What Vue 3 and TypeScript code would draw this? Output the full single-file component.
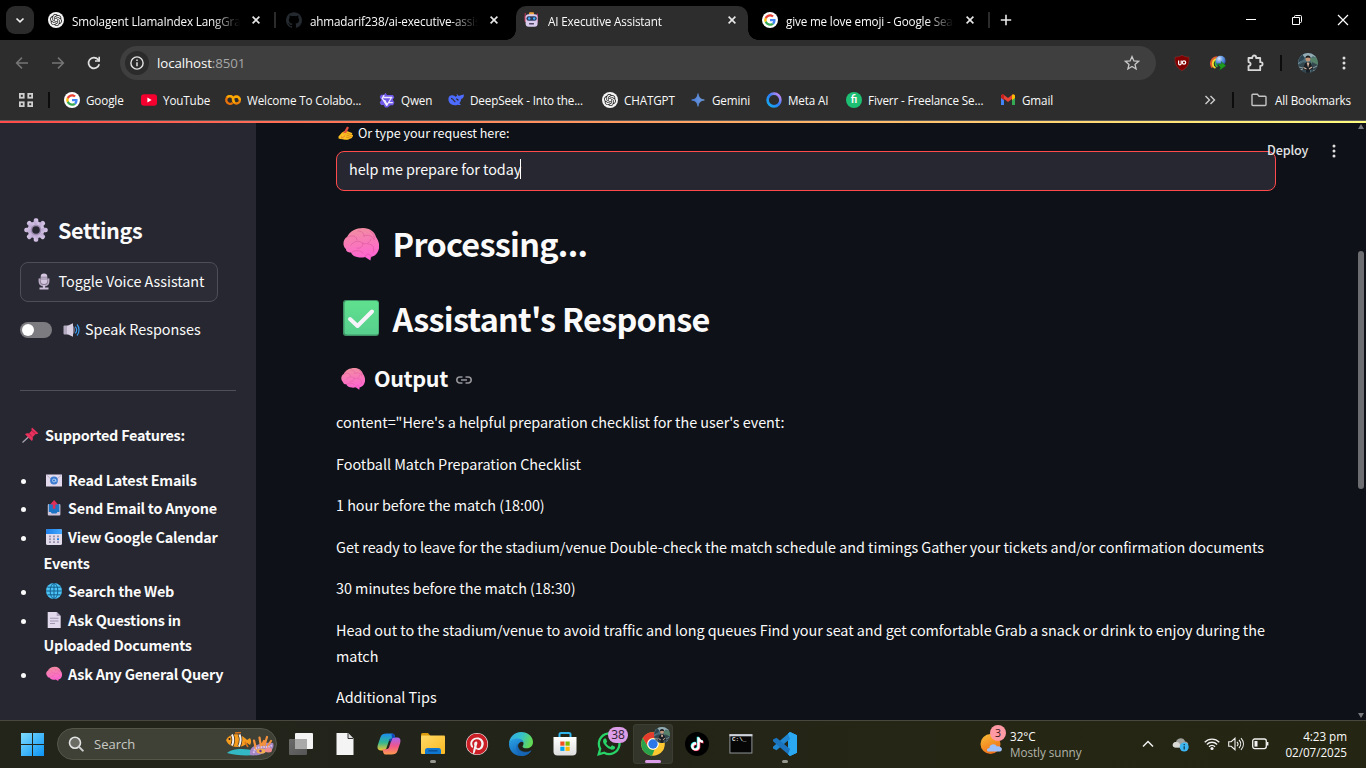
<script setup lang="ts">
import { h } from 'vue'
import type { FunctionalComponent } from 'vue'

const Ico: FunctionalComponent<{ n: string; w?: number; t?: number }> = (p) =>
  h('svg', { width: p.w ?? 16, height: p.t ?? p.w ?? 16 }, [h('use', { href: '#i-' + p.n })])
Ico.props = ['n', 'w', 't']

interface Tab { icon: string; title: string; active?: boolean; sep?: boolean }
const tabs: Tab[] = [
  { icon: 'openai', title: 'Smolagent LlamaIndex LangGraph', sep: true },
  { icon: 'github', title: 'ahmadarif238/ai-executive-assistant' },
  { icon: 'robot', title: 'AI Executive Assistant', active: true },
  { icon: 'google', title: 'give me love emoji - Google Search', sep: true },
]

interface Bookmark { icon: string; label: string; width: number; glyph?: string }
const bookmarks: Bookmark[] = [
  { icon: 'google', label: 'Google', width: 77 },
  { icon: 'youtube', label: 'YouTube', width: 84 },
  { icon: 'colab', label: 'Welcome To Colabo...', width: 154 },
  { icon: 'qwen', label: 'Qwen', width: 69 },
  { icon: 'deepseek', label: 'DeepSeek - Into the...', width: 154 },
  { icon: 'openai', label: 'CHATGPT', width: 88 },
  { icon: 'gemini', label: 'Gemini', width: 76 },
  { icon: 'meta', label: 'Meta AI', width: 80 },
  { icon: 'fiverr', label: 'Fiverr - Freelance Se...', width: 154, glyph: 'fi' },
  { icon: 'gmail', label: 'Gmail', width: 60 },
]

const features = [
  { icon: 'mail', text: 'Read Latest Emails' },
  { icon: 'outbox', text: 'Send Email to Anyone' },
  { icon: 'calendar', text: 'View Google Calendar Events' },
  { icon: 'globe', text: 'Search the Web' },
  { icon: 'page', text: 'Ask Questions in Uploaded Documents' },
  { icon: 'brain', text: 'Ask Any General Query' },
]

const paragraphs = [
  'content="Here\'s a helpful preparation checklist for the user\'s event:',
  'Football Match Preparation Checklist',
  '1 hour before the match (18:00)',
  'Get ready to leave for the stadium/venue Double-check the match schedule and timings Gather your tickets and/or confirmation documents',
  '30 minutes before the match (18:30)',
  'Head out to the stadium/venue to avoid traffic and long queues Find your seat and get comfortable Grab a snack or drink to enjoy during the match',
  'Additional Tips',
]

interface App { icon: string; mark?: 'dot' | 'line'; badge?: string; avatar?: boolean; prompt?: string }
const apps: App[] = [
  { icon: 'taskview' },
  { icon: 'doc' },
  { icon: 'copilot' },
  { icon: 'explorer', mark: 'dot' },
  { icon: 'pinterest' },
  { icon: 'edge' },
  { icon: 'store' },
  { icon: 'whatsapp', badge: '38' },
  { icon: 'chrome', mark: 'line', avatar: true },
  { icon: 'tiktok' },
  { icon: 'terminal', prompt: 'C:\\_' },
  { icon: 'vscode', mark: 'dot' },
]
</script>

<template>
  <div class="screen">
    <svg class="defs" width="0" height="0">
      <defs>
        <linearGradient id="g-brain" x1="0" y1="0" x2="0.2" y2="1"><stop offset="0" stop-color="#f0919c" /><stop offset="1" stop-color="#ff64d2" /></linearGradient>
        <linearGradient id="g-check" x1="0" y1="0" x2="0" y2="1"><stop offset="0" stop-color="#5fe08e" /><stop offset="1" stop-color="#58cf8e" /></linearGradient>
        <linearGradient id="g-gear" x1="1" y1="0" x2="0" y2="1"><stop offset="0" stop-color="#dccdea" /><stop offset="1" stop-color="#b8a3cf" /></linearGradient>
        <linearGradient id="g-gem" x1="0" y1="0" x2="1" y2="0"><stop offset="0" stop-color="#4c7fe0" /><stop offset="1" stop-color="#6f9ad8" /></linearGradient>
        <linearGradient id="g-meta" x1="0" y1="1" x2="1" y2="0"><stop offset="0" stop-color="#12b5f0" /><stop offset="0.5" stop-color="#2a7cf5" /><stop offset="1" stop-color="#e08cf5" /></linearGradient>
        <linearGradient id="g-win" x1="0" y1="0" x2="1" y2="1"><stop offset="0" stop-color="#7fdcff" /><stop offset="1" stop-color="#0a94f5" /></linearGradient>
        <linearGradient id="g-folder" x1="0" y1="0" x2="1" y2="1"><stop offset="0" stop-color="#ffda66" /><stop offset="1" stop-color="#fbb822" /></linearGradient>
        <linearGradient id="g-edge1" x1="0" y1="0" x2="1" y2="0.3"><stop offset="0" stop-color="#30a5e8" /><stop offset="0.55" stop-color="#35c1c9" /><stop offset="1" stop-color="#62d957" /></linearGradient>
        <linearGradient id="g-edge2" x1="0" y1="0" x2="0.6" y2="1"><stop offset="0" stop-color="#2aa2e6" /><stop offset="1" stop-color="#1160b4" /></linearGradient>
        <linearGradient id="g-cop1" x1="0" y1="0" x2="0" y2="1"><stop offset="0" stop-color="#1a8df0" /><stop offset="0.55" stop-color="#35b890" /><stop offset="1" stop-color="#f2c530" /></linearGradient>
        <linearGradient id="g-cop2" x1="0" y1="0" x2="0" y2="1"><stop offset="0" stop-color="#a765f0" /><stop offset="0.5" stop-color="#f0568c" /><stop offset="1" stop-color="#ff9a50" /></linearGradient>
        <linearGradient id="g-sun" x1="0" y1="0" x2="0.5" y2="1"><stop offset="0" stop-color="#f9c038" /><stop offset="1" stop-color="#f07018" /></linearGradient>
        <linearGradient id="g-store" x1="0" y1="0" x2="0" y2="1"><stop offset="0" stop-color="#ffffff" /><stop offset="1" stop-color="#dddddd" /></linearGradient>
        <linearGradient id="g-cal" x1="0" y1="0" x2="1" y2="0"><stop offset="0" stop-color="#1d7fe8" /><stop offset="1" stop-color="#46a8ff" /></linearGradient>
        <linearGradient id="g-tv" x1="0" y1="0" x2="1" y2="1"><stop offset="0" stop-color="#6a6a6a" /><stop offset="1" stop-color="#555" /></linearGradient>
        <radialGradient id="g-idm" cx=".35" cy=".3" r=".8"><stop offset="0" stop-color="#d5e8ff" /><stop offset=".5" stop-color="#5d92e0" /><stop offset="1" stop-color="#1f4fae" /></radialGradient>
        <clipPath id="c-av"><circle cx="10" cy="10" r="10" /></clipPath>
      </defs>

      <symbol id="i-openai" viewBox="0 0 16 16"><circle cx="8" cy="8" r="8" fill="#f4f4f4" /><g transform="translate(2 2) scale(.5)" fill="#222"><path d="M22.2819 9.8211a5.9847 5.9847 0 0 0-.5157-4.9108 6.0462 6.0462 0 0 0-6.5098-2.9A6.0651 6.0651 0 0 0 4.9807 4.1818a5.9847 5.9847 0 0 0-3.9977 2.9 6.0462 6.0462 0 0 0 .7427 7.0966 5.98 5.98 0 0 0 .511 4.9107 6.051 6.051 0 0 0 6.5146 2.9001A5.9847 5.9847 0 0 0 13.2599 24a6.0557 6.0557 0 0 0 5.7718-4.2058 5.9894 5.9894 0 0 0 3.9977-2.9001 6.0557 6.0557 0 0 0-.7475-7.0729zm-9.022 12.6081a4.4755 4.4755 0 0 1-2.8764-1.0408l.1419-.0804 4.7783-2.7582a.7948.7948 0 0 0 .3927-.6813v-6.7369l2.02 1.1686a.071.071 0 0 1 .038.052v5.5826a4.504 4.504 0 0 1-4.4945 4.4944zm-9.6607-4.1254a4.4708 4.4708 0 0 1-.5346-3.0137l.142.0852 4.783 2.7582a.7712.7712 0 0 0 .7806 0l5.8428-3.3685v2.3324a.0804.0804 0 0 1-.0332.0615L9.74 19.9502a4.4992 4.4992 0 0 1-6.1408-1.6464zM2.3408 7.8956a4.485 4.485 0 0 1 2.3655-1.9728V11.6a.7664.7664 0 0 0 .3879.6765l5.8144 3.3543-2.0201 1.1685a.0757.0757 0 0 1-.071 0l-4.8303-2.7865A4.504 4.504 0 0 1 2.3408 7.872zm16.5963 3.8558L13.1038 8.364 15.1192 7.2a.0757.0757 0 0 1 .071 0l4.8303 2.7913a4.4944 4.4944 0 0 1-.6765 8.1042v-5.6772a.79.79 0 0 0-.407-.667zm2.0107-3.0231l-.142-.0852-4.7735-2.7818a.7759.7759 0 0 0-.7854 0L9.409 9.2297V6.8974a.0662.0662 0 0 1 .0284-.0615l4.8303-2.7866a4.4992 4.4992 0 0 1 6.6802 4.66zM8.3065 12.863l-2.02-1.1638a.0804.0804 0 0 1-.038-.0567V6.0742a4.4992 4.4992 0 0 1 7.3757-3.4537l-.142.0805L8.704 5.459a.7948.7948 0 0 0-.3927.6813zm1.0976-2.3654l2.602-1.4998 2.6069 1.4998v2.9994l-2.5974 1.4997-2.6067-1.4997Z" /></g></symbol>
      <symbol id="i-github" viewBox="0 0 24 24"><path fill="#24292f" d="M12 .297c-6.63 0-12 5.373-12 12 0 5.303 3.438 9.8 8.205 11.385.6.113.82-.258.82-.577 0-.285-.01-1.04-.015-2.04-3.338.724-4.042-1.61-4.042-1.61C4.422 18.07 3.633 17.7 3.633 17.7c-1.087-.744.084-.729.084-.729 1.205.084 1.838 1.236 1.838 1.236 1.07 1.835 2.809 1.305 3.495.998.108-.776.417-1.305.76-1.605-2.665-.3-5.466-1.332-5.466-5.93 0-1.31.465-2.38 1.235-3.22-.135-.303-.54-1.523.105-3.176 0 0 1.005-.322 3.3 1.23.96-.267 1.98-.399 3-.405 1.02.006 2.04.138 3 .405 2.28-1.552 3.285-1.23 3.285-1.23.645 1.653.24 2.873.12 3.176.765.84 1.23 1.91 1.23 3.22 0 4.61-2.805 5.625-5.475 5.92.42.36.81 1.096.81 2.22 0 1.606-.015 2.896-.015 3.286 0 .315.21.69.825.57C20.565 22.092 24 17.592 24 12.297c0-6.627-5.373-12-12-12" /></symbol>
      <symbol id="i-robot" viewBox="0 0 16 16"><rect x="5" y="0.3" width="5" height="3" rx="1" fill="#f3a33c" /><path d="M1.200 1v5" stroke="#c2355e" stroke-width="1" /><rect x=".6" y="4" width="2" height="6" rx="1" fill="#d8446c" /><rect x="12.600" y="1.500" width="1.400" height="9" rx=".7" fill="#b03060" /><rect x="1.600" y="2.200" width="12" height="12.600" rx="3" fill="#d9cbec" /><rect x="2.400" y="4.200" width="10.400" height="4.600" rx="2.200" fill="#2c3a5c" /><circle cx="5.200" cy="6.500" r="1.200" fill="#3cb0ff" /><circle cx="10.200" cy="6.500" r="1.200" fill="#3cb0ff" /><rect x="5" y="11" width="5" height="1.400" rx=".5" fill="#4d4262" /></symbol>
      <symbol id="i-google" viewBox="0 0 16 16"><circle cx="8" cy="8" r="8" fill="#fff" /><g transform="translate(2.2 2.2) scale(.242)"><path fill="#EA4335" d="M24 9.5c3.54 0 6.71 1.22 9.21 3.6l6.85-6.85C35.9 2.38 30.47 0 24 0 14.62 0 6.51 5.38 2.56 13.22l7.98 6.19C12.43 13.72 17.74 9.5 24 9.5z" /><path fill="#4285F4" d="M46.98 24.55c0-1.57-.15-3.09-.38-4.55H24v9.02h12.94c-.58 2.96-2.26 5.48-4.78 7.18l7.73 6c4.51-4.18 7.09-10.36 7.09-17.65z" /><path fill="#FBBC05" d="M10.53 28.59A14.5 14.5 0 0 1 9.77 24c0-1.59.27-3.14.76-4.59l-7.98-6.19A23.9 23.9 0 0 0 0 24c0 3.87.92 7.54 2.56 10.78l7.97-6.19z" /><path fill="#34A853" d="M24 48c6.48 0 11.93-2.13 15.89-5.81l-7.73-6c-2.15 1.45-4.92 2.3-8.16 2.3-6.26 0-11.57-4.22-13.47-9.91l-7.98 6.19C6.51 42.62 14.62 48 24 48z" /></g></symbol>
      <symbol id="i-youtube" viewBox="0 0 16 16"><rect y="2.300" width="16" height="11.400" rx="3" fill="#f6002f" /><path d="M6.400 5.600v4.800L10.600 8z" fill="#fff" /></symbol>
      <symbol id="i-colab" viewBox="0 0 16 16"><g fill="none" stroke-width="2.300"><path d="M7.600 5.200A3.800 3.800 0 1 0 7.600 10.800" stroke="#e8710a" /><circle cx="11.400" cy="8" r="3.500" stroke="#e8800a" /><path d="M2 5.200A3.800 3.800 0 0 1 7.400 5.200L9.300 10.800M14.900 8A3.500 3.500 0 0 0 9 5.600" stroke="#f9ab00" /></g></symbol>
      <symbol id="i-qwen" viewBox="0 0 16 16"><path d="M6.500.8 8 3h6l1.300 2.500-1.500 2 1.600 3.300-1.300 2.400h-2.700L8.600 15.500H6l-1.300-2.600H2L.7 10.500 2.300 8 .7 5 2 2.700h3z" fill="#6e5ae8" /><path d="M5.200 3.200 3.200 6.200l4.600 7.400M4.500 5.500h8.800M12.500 5.500 8.200 12.800 5.600 8M13.800 10.600H10" stroke="#efeaff" stroke-width="1.300" fill="none" /></symbol>
      <symbol id="i-deepseek" viewBox="0 0 16 16"><path d="M.4 7c0-2.600 1.800-4 4.400-3.700 1 .2 2 .8 2.800 1.500l1.700-1c-.8-.4-.9-1.200-.4-1.600.8.3 1.500 1.100 1.900 1.900 1.200-.2 1.700-1 3-1.100.8-.1 1.400-.4 1.900-.8.5 2.600-.6 4.300-2.500 4.700-.2 2-1 3.200-1.900 4.300l1.600 1.200c-1 .8-2.300.7-3.300.3C5 14.300.4 12 .4 7z" fill="#4d6bfe" /><path d="M3 6.400c1.800-.2 3 2.400 4.300 3.800M8.200 6.800l1.700.9v1" stroke="#2d2d2d" stroke-width="1.100" fill="none" /></symbol>
      <symbol id="i-gemini" viewBox="0 0 16 16"><path d="M8 1.600C8.600 5.600 10.400 7.400 14.400 8 10.400 8.600 8.600 10.400 8 14.400 7.400 10.400 5.600 8.600 1.600 8 5.600 7.400 7.400 5.600 8 1.600z" fill="url(#g-gem)" stroke="url(#g-gem)" stroke-width=".7" /></symbol>
      <symbol id="i-meta" viewBox="0 0 16 16"><circle cx="8" cy="8" r="6.400" fill="none" stroke="url(#g-meta)" stroke-width="2.600" /></symbol>
      <symbol id="i-fiverr" viewBox="0 0 16 16"><circle cx="8" cy="8" r="8" fill="#1dbf73" /></symbol>
      <symbol id="i-gmail" viewBox="0 0 16 16"><path d="M1 4v9h3V6z" fill="#4285f4" /><path d="M12 6v7h3V4z" fill="#34a853" /><path d="M1 4.400C1 2.400 3 2.200 4 3l4 3.100L12 3c1-.8 3-.6 3 1.400L8 10z" fill="#ea4335" /><path d="M12 3c1-.8 3-.6 3 1.400V6l-3 2.200z" fill="#fbbc04" /><path d="M1 4.400V6l3 2.200V3C3 2.200 1 2.400 1 4.400z" fill="#c5221f" /></symbol>

      <symbol id="i-close" viewBox="0 0 16 16"><path d="m4.600 4.600 6.800 6.800M11.400 4.600l-6.800 6.800" stroke="#e8e8e8" stroke-width="1.600" /></symbol>
      <symbol id="i-back" viewBox="0 0 16 16"><path d="M14 8H3M8 2.600 2.600 8 8 13.400" stroke="#757575" stroke-width="1.500" fill="none" /></symbol>
      <symbol id="i-fwd" viewBox="0 0 16 16"><path d="M2 8h11M8 2.600 13.400 8 8 13.400" stroke="#757575" stroke-width="1.500" fill="none" /></symbol>
      <symbol id="i-reload" viewBox="0 0 16 16"><path d="M13.200 9.200A5.400 5.400 0 1 1 12 4.400L13.400 6" stroke="#e0e0e0" stroke-width="1.700" fill="none" /><path d="M14 1.800v5H9V5.300h3.400V1.800z" fill="#e0e0e0" /></symbol>
      <symbol id="i-info" viewBox="0 0 24 24"><circle cx="12" cy="12" r="12" fill="#2b2b2b" /><circle cx="12" cy="12" r="6.100" fill="none" stroke="#e3e3e3" stroke-width="1.400" /><path d="M12 11.200v4M12 8.400v1.500" stroke="#e3e3e3" stroke-width="1.500" /></symbol>
      <symbol id="i-star" viewBox="0 0 16 16"><path d="m8 1.600 1.900 4.300 4.700.4-3.600 3.100 1.100 4.600L8 11.500 3.900 14 5 9.400 1.400 6.300l4.700-.4z" fill="none" stroke="#c9c9c9" stroke-width="1.300" /></symbol>
      <symbol id="i-ublock" viewBox="0 0 16 16"><path d="M8 .2c2 1.300 4.600 1.900 7 2 .2 6.200-.8 10-7 13.500C1.800 12.200.8 8.400 1 2.200c2.400-.1 5-.7 7-2z" fill="#800000" stroke="#a83c3c" stroke-width=".4" /><path d="M4.600 5.500v3a1.300 1.300 0 0 0 2.600 0v-3" stroke="#fff" stroke-width="1.200" fill="none" /><circle cx="10" cy="7.500" r="1.700" stroke="#fff" stroke-width="1.200" fill="none" /></symbol>
      <symbol id="i-idm" viewBox="0 0 16 16"><path d="M7.500 2.200A6.300 6.300 0 0 0 2.500 12.500" stroke="#e05a2b" stroke-width="2" fill="none" /><path d="M6.500 4A4.800 4.800 0 0 0 5.500 13" stroke="#f5d82e" stroke-width="1.800" fill="none" /><path d="M7 5.600a3.500 3.500 0 0 0 .5 6" stroke="#35b84a" stroke-width="1.800" fill="none" /><circle cx="10.600" cy="5.700" r="5" fill="url(#g-idm)" /><path d="M7.500 8.800h4.200l-.5-2.300L16 10.800l-6.500 4.700.8-2.900z" fill="#1f9a1f" stroke="#0b5c0f" stroke-width=".4" /></symbol>
      <symbol id="i-puzzle" viewBox="0 0 18 18"><path d="M2.500 4h3.800V3.400a1.900 1.900 0 0 1 3.800 0V4h4.100v4.200h.6a1.800 1.800 0 0 1 0 3.600h-.6v4.400H2.500v-4.100c2.800-.4 2.800-3.600 0-4z" fill="none" stroke="#d8d8d8" stroke-width="1.800" stroke-linejoin="round" /></symbol>
      <symbol id="i-avatar" viewBox="0 0 20 20"><g clip-path="url(#c-av)"><rect width="20" height="20" fill="#4a6a76" /><path d="M0 0h20v6l-5-3-4 4-5-2-6 6z" fill="#93acb4" /><path d="M0 3l4-2 3 4-2 2-5 3z" fill="#2b4450" /><path d="M12 5l8-1v8l-6 2z" fill="#55806a" /><path d="M0 12l6-3 3 3v8H0zM14 9l6 3v8h-7z" fill="#34474f" /><path d="M1 14l4 1M15 15l4-2M2 17l3-1M15 18l3-1" stroke="#8c9a9c" stroke-width="1" /><circle cx="10" cy="6" r="2.500" fill="#c39578" /><path d="M7.300 5.500c0-4 5.400-4 5.400 0C11 4.300 9 4.300 7.300 5.500z" fill="#16181b" /><path d="M7 10c1.500-1.500 4.500-1.500 6 0l2 6-3 1v3H8v-3l-3-1z" fill="#1b1f26" /><path d="M5.500 14.500l3 1.500M14 14l-3 2M9.300 9.500l.8 3 .8-3" stroke="#d2b49c" stroke-width="1.200" /></g></symbol>
      <symbol id="i-dots" viewBox="0 0 4 16"><g fill="#dedede"><circle cx="2" cy="3" r="1.500" /><circle cx="2" cy="8" r="1.500" /><circle cx="2" cy="13" r="1.500" /></g></symbol>
      <symbol id="i-grid" viewBox="0 0 14 14"><g fill="none" stroke="#d0d0d0" stroke-width="1.800"><rect x=".9" y=".9" width="3.800" height="3.800" /><rect x="9.300" y=".9" width="3.800" height="3.800" /><rect x=".9" y="9.300" width="3.800" height="3.800" /><rect x="9.300" y="9.300" width="3.800" height="3.800" /></g></symbol>
      <symbol id="i-more" viewBox="0 0 12 12"><path d="m1.500 2 4 4-4 4M6.500 2l4 4-4 4" stroke="#cfcfcf" stroke-width="1.400" fill="none" /></symbol>
      <symbol id="i-dir" viewBox="0 0 16 14"><path d="M1 2.200c0-.6.3-.9.9-.9h4.500l1.700 1.900h6c.6 0 .9.300.9.900v7.500c0 .6-.3.9-.9.900H1.900c-.6 0-.9-.3-.9-.9z" fill="none" stroke="#c4c4c4" stroke-width="1.400" /></symbol>

      <symbol id="i-brain" viewBox="0 0 36 33"><path d="M3 21C-1 18 0 11 4 9 7 3 13 0 20 0c7 0 12 4 13 9 4 5 4 12 1 16-1.500 2.500-4 3.500-6 4l-.6 3.500L22 29c-3 .8-5 .6-8 0-3-.5-5-2-6-4.500-2 .2-5-.5-5-3.500z" fill="url(#g-brain)" /><g fill="none" stroke="#d65099" stroke-width="1" stroke-linecap="round" opacity=".5"><path d="M5 9c5-3 9 0 9 3M15 3c4 0 6 2 6 5M21 8c4-2 8 0 10 3M8 17c3-4 8-5 11-2 4 2 8 0 9-4M20 15c0 4-3 6-6 5M25 16c5 0 7 4 5 8M9 24c4-2 8-2 11 1M22 29c1-4 5-4 6 0M27 3c3 2 5 5 4 9" /></g></symbol>
      <symbol id="i-check" viewBox="0 0 36 36"><rect width="36" height="36" rx="3" fill="#3f9266" /><rect x="1.500" y="1" width="34" height="33.500" rx="2.500" fill="url(#g-check)" /><path d="m7 19 7.500 7L29 11.500" fill="none" stroke="#f6f3fa" stroke-width="4" stroke-linecap="round" stroke-linejoin="round" /></symbol>
      <symbol id="i-gear" viewBox="0 0 24 24"><g fill="url(#g-gear)"><circle cx="12" cy="12" r="8.400" /><rect v-for="a in 8" :key="a" x="9.700" y="0.300" width="4.600" height="6" rx="1.800" :transform="`rotate(${a * 45} 12 12)`" /></g><circle cx="12" cy="12" r="5.400" fill="#9d8bb0" /><circle cx="12" cy="12" r="3.800" fill="#262730" /></symbol>
      <symbol id="i-mic" viewBox="0 0 12 17"><path d="M1.300 5.500v3c0 5.500 9.400 5.500 9.400 0v-3" fill="#85788f" stroke="#b9abc4" stroke-width="1.500" /><rect x="2.700" y=".5" width="6.600" height="10.500" rx="3.200" fill="#d3c6de" /><path d="M3 4.200h6M3 6h6" stroke="#8c7e96" stroke-width=".9" /><path d="M5 12h2v2.500h3.500V16.500h-9v-2H5z" fill="#cdbfd9" /></symbol>
      <symbol id="i-speaker" viewBox="0 0 17 14"><rect x=".5" y="2.500" width="5" height="9" rx="1" fill="#b5abc0" /><path d="M4 3 10 .3v13.400L4 11z" fill="#d9cfe2" /><path d="M10 3c2.400 1 2.400 7 0 8z" fill="#7d7488" /><path d="M12.300 3.600c1.600 2 1.600 4.800 0 6.800M14 1.500c2.700 3 2.700 8 0 11" fill="none" stroke="#3a9cf0" stroke-width="1.200" /></symbol>
      <symbol id="i-pin" viewBox="0 0 17 16"><path d="m7 9.500-6.500 6" stroke="#a8a3b3" stroke-width="1.300" /><path d="m10 .6 6.300 5.600c-1 1.200-2 1-2.700.8l-3 3.200c.6 1.500.2 2.900-.7 3.800L3 7.200c1-1 2.300-1.300 3.800-.7l3-3c-.5-1-.4-2 .2-2.900z" fill="#e8315c" /><path d="M7.200 6.600 10 9.600M10 3.600l3.400 3.200" stroke="#a81e45" stroke-width="1" /></symbol>
      <symbol id="i-mail" viewBox="0 0 16 16"><rect y="2.500" width="16" height="12" rx=".6" fill="#e2d9ed" /><path d="m.5 3 7.500 6.500L15.500 3" stroke="#bdb2cc" fill="none" /><circle cx="8" cy="8.500" r="3.900" fill="#3b7bd0" /><circle cx="8" cy="8.500" r="1.500" fill="none" stroke="#b7d4f5" stroke-width=".9" /><path d="M9.500 7v2c0 .8 1.300.6 1.300-.6" stroke="#b7d4f5" stroke-width=".7" fill="none" /></symbol>
      <symbol id="i-outbox" viewBox="0 0 16 16"><rect x="1.800" y="4" width="12.600" height="11.600" rx="1" fill="#cfc5da" /><path d="M2.800 4h10.600v8h-2l-1 1.400H5.800L4.800 12h-2z" fill="#1d74c4" /><path d="M8.100 0 12 4.500H9.400v4.300H6.800V4.500H4.200z" fill="#e02f56" /></symbol>
      <symbol id="i-calendar" viewBox="0 0 16 16"><rect width="16" height="16" rx="1.600" fill="#e2dbec" /><path d="M0 5V1.600Q0 0 1.600 0h12.800Q16 0 16 1.600V5z" fill="url(#g-cal)" /><g fill="#9e95ad"><rect x="3" y="6.500" width="2" height="1.800" /><rect x="7" y="6.500" width="2" height="1.800" /><rect x="11" y="6.500" width="2" height="1.800" /><rect x="3" y="9.300" width="2" height="1.800" /><rect x="7" y="9.300" width="2" height="1.800" /><rect x="3" y="12.200" width="2" height="1.800" /><rect x="7" y="12.200" width="2" height="1.800" /></g><rect x="11" y="9.300" width="2" height="1.800" fill="#1d7fe8" /><rect x="11" y="12.200" width="2" height="1.800" fill="#9e95ad" /></symbol>
      <symbol id="i-globe" viewBox="0 0 16 16"><circle cx="8" cy="8" r="8" fill="#4cc3f5" /><g fill="none" stroke="#14608f" stroke-width="1"><ellipse cx="8" cy="8" rx="3.800" ry="7.600" /><path d="M8 0v16M0 8h16M1.500 4.200h13M1.500 11.800h13" /></g></symbol>
      <symbol id="i-page" viewBox="0 0 16 16"><path d="M1.700 0h9l4 4v12h-13z" fill="#e2d9ed" /><path d="m10.700 0 4 4h-4z" fill="#aea2bd" /><path d="M4 6.200h8.500M4 9h8.500M4 11.500h5" stroke="#a096b0" stroke-width="1.100" /></symbol>
      <symbol id="i-hand" viewBox="0 0 16 14"><path d="M.5 10.500 4 6.500l3.500-2 6 2.200c1.300.6.9 1.700 0 1.800l1.300.6c.6.9 0 1.700-.7 1.700.4.900-.3 1.500-1.200 1.500L10 13.800c-3 .3-6.500-.8-9.500-1.300z" fill="#fcc021" /><path d="m9 7.400 5 1.300M8.500 9.200l5.500 1.700M8 11l5 1.500" stroke="#d07c14" stroke-width=".7" /><path d="m3.600 10.200 5.400-9.700 2 1L6.200 11l-2.700 1.600z" fill="#e0503c" /><path d="M3 9.500c1-1.800 3-2.500 5-2.800l-.5 2-3 3z" fill="#fcc021" /></symbol>
      <symbol id="i-link" viewBox="0 0 16 8"><path d="M6.500 1H3.800a3 3 0 0 0 0 6h2.700M9.500 1h2.700a3 3 0 0 1 0 6H9.500M5 4h6" stroke="#96979c" stroke-width="1.600" fill="none" /></symbol>

      <symbol id="i-win" viewBox="0 0 23 23"><path d="M0 0h11v11H0zM12 0h11v11H12zM0 12h11v11H0zM12 12h11v11H12z" fill="url(#g-win)" /></symbol>
      <symbol id="i-search" viewBox="0 0 16 16"><circle cx="7" cy="6.800" r="5.500" fill="#6b6d65" stroke="#e4e6e6" stroke-width="1.600" /><path d="m10.800 10.600 4 4" stroke="#d0d2d2" stroke-width="2" stroke-linecap="round" /></symbol>
      <symbol id="i-reef" viewBox="0 0 50 24"><path d="M2 21c5-5 19-5 28-2l6 3c-8 2-25 2-34-1z" fill="#33b9c5" /><path d="M1 8C4 2 11 .5 17 4c2 1 4 3 5 4l3-2c1.500 2 1.500 5 0 7l-3-2c-3 4-10 5-15 3C4 13 2 11 1 8z" fill="#f59b1e" /><path d="M7 2.500q2.500 5.500 0 11M14.500 2.500q2.500 5.500-.5 12" stroke="#3a2a1c" stroke-width="3.400" fill="none" /><path d="M7 2.500q2.500 5.500 0 11M14.500 2.500q2.500 5.500-.5 12" stroke="#f5f3ef" stroke-width="2" fill="none" /><circle cx="4.500" cy="7" r="1" fill="#222" /><path d="M20 10l3 5M10 1l6-.5" stroke="#d9721a" stroke-width="1.500" /><path d="M25 23c-1-5 2-9 7-10 6-3 13-2 16-2 2 5-2 9-7 9-5 3-11 4-16 3z" fill="#a487c5" /><path d="M31 17 29 8.500M36 15 34.500 5.500M39 15l3-10M42 15l4-6M37 13l2-4" stroke="#f3913c" stroke-width="2.200" stroke-linecap="round" /><path d="M29 21c-1-4 4-6 9-6s7 0 9-2" stroke="#d8c2ea" stroke-width="2" stroke-dasharray="1.500 1" fill="none" /><ellipse cx="36" cy="19" rx="4.500" ry="2.600" fill="#f3ad4c" /><circle cx="35.500" cy="19" r="1.200" fill="#63308c" /><ellipse cx="43.500" cy="18" rx="3.500" ry="2.500" fill="#ee8d91" /></symbol>
      <symbol id="i-taskview" viewBox="0 0 24 24"><rect x="6" y="1" width="18" height="16" rx="1" fill="#f3f3f3" /><rect y="7" width="18" height="16" rx="1" fill="url(#g-tv)" /><rect x="6" y="7" width="12" height="10" fill="#a9a9a9" /></symbol>
      <symbol id="i-doc" viewBox="0 0 24 24"><path d="M3.500 1h11.600l5.400 5.400V23h-17z" fill="#f4f4f4" /><path d="M15 1.200v5.300h5.200" fill="#ddd" stroke="#333" stroke-width="1" /></symbol>
      <symbol id="i-copilot" viewBox="0 0 24 24"><path d="M9.500 1.500h5.600c1.500 0 2.200.8 2.700 2.300l.7 2.900H15c-2 0-2.800 1-3.300 2.800L9.500 16c-.5 1.600-1.300 2.400-3 2.400H4c-3.500 0-4-2.600-3.100-5.600L3.500 5C4.500 2.300 6.500 1.500 9.500 1.500z" fill="url(#g-cop1)" /><path d="M14.500 22.500H8.900c-1.500 0-2.200-.8-2.700-2.300l-.7-2.900H9c2 0 2.800-1 3.300-2.800L14.500 8c.5-1.600 1.300-2.400 3-2.400H20c3.500 0 4 2.600 3.100 5.600L20.500 19c-1 2.700-3 3.500-6 3.500z" fill="url(#g-cop2)" /><path d="M14.500 1.500c1.800 0 2.700.9 3.200 2.300l.6 1.800c-2 0-3.200.8-3.700 2.300L14 10l-2-1.500c.4-1.500 1.300-2 3-2z" fill="#1746b8" /></symbol>
      <symbol id="i-explorer" viewBox="0 0 24 24"><path d="M0 2.500Q0 1 1.500 1H7l2.500 3H0z" fill="#d99a0c" /><rect y="3.500" width="24" height="18.500" rx="1" fill="url(#g-folder)" /><path d="M4 22v-3.500q0-2.500 2.500-2.500h11q2.500 0 2.500 2.500V22z" fill="#0f77cf" /><path d="M7.500 18.800h9" stroke="#0a4f93" stroke-width="1.400" /></symbol>
      <symbol id="i-pinterest" viewBox="-1 -1 26 26"><circle cx="12" cy="12" r="12" fill="#f4f4f4" /><g transform="translate(.6 .6) scale(.95)"><path fill="#cb1f27" d="M12.017 0C5.396 0 .029 5.367.029 11.987c0 5.079 3.158 9.417 7.618 11.162-.105-.949-.199-2.403.041-3.439.219-.937 1.406-5.957 1.406-5.957s-.359-.72-.359-1.781c0-1.663.967-2.911 2.168-2.911 1.024 0 1.518.769 1.518 1.688 0 1.029-.653 2.567-.992 3.992-.285 1.193.6 2.165 1.775 2.165 2.128 0 3.768-2.245 3.768-5.487 0-2.861-2.063-4.869-5.008-4.869-3.41 0-5.409 2.562-5.409 5.199 0 1.033.394 2.143.889 2.741.099.12.112.225.085.345-.09.375-.293 1.199-.334 1.363-.053.225-.172.271-.401.165-1.495-.69-2.433-2.878-2.433-4.646 0-3.776 2.748-7.252 7.92-7.252 4.158 0 7.392 2.967 7.392 6.923 0 4.135-2.607 7.462-6.233 7.462-1.214 0-2.354-.629-2.758-1.379l-.749 2.848c-.269 1.045-1.004 2.352-1.498 3.146 1.123.345 2.306.535 3.55.535 6.607 0 11.985-5.365 11.985-11.987C23.97 5.39 18.592.026 11.985.026z" /></g></symbol>
      <symbol id="i-edge" viewBox="0 0 24 24"><path d="M12 0c7 0 12 4.800 12 10 0 4-3 6.300-6.500 6.300-2.800 0-4-1-4-1.800 0-.7 1-1.200 1-3C14.500 9 12 7 8.500 7 4.500 7 1 9.500 0 12 0 5 5.500 0 12 0z" fill="url(#g-edge1)" /><path d="M0 12c1-4 4.500-5.500 8.500-5.500 3 0 5.500 1.500 6 4-1-.8-2.200-.8-3.200-.3-4.500 2.300-2 10.300 4.700 10.300 2.500 0 4.500-.7 6.500-2.300C20.500 22 16.500 24 12 24 5 24 0 18.500 0 12z" fill="url(#g-edge2)" /><path d="M9 11.500C5.500 14 7 22 13.500 23.900 18 23.500 21 21 22.500 18.200 18 21 10.500 20 9 15z" fill="#1866b5" opacity=".8" /></symbol>
      <symbol id="i-store" viewBox="0 0 24 24"><path d="M6.500 6V2.500Q6.500 1 8 1h8q1.500 0 1.500 1.500V6" fill="none" stroke="#2fb4ee" stroke-width="2" /><path d="M.5 5h23v14.500q0 4-4 4h-15q-4 0-4-4z" fill="url(#g-store)" /><path d="M7.300 9.500h4.200v4.200H7.300z" fill="#f25022" /><path d="M12.500 9.500h4.200v4.200h-4.200z" fill="#7fba00" /><path d="M7.300 14.700h4.200v4.200H7.300z" fill="#00a4ef" /><path d="M12.500 14.700h4.200v4.200h-4.200z" fill="#ffb900" /></symbol>
      <symbol id="i-whatsapp" viewBox="0 0 24 24"><path d="m1.700 22.300 1.500-5.600a10.300 10.300 0 1 1 4 4z" fill="none" stroke="#27d367" stroke-width="2.300" /><path fill="#27d367" d="M17.5 14.4c-.3-.15-1.76-.87-2.03-.97-.27-.1-.47-.15-.67.15-.2.3-.77.97-.94 1.16-.17.2-.35.22-.64.07-.3-.15-1.26-.46-2.39-1.47-.88-.79-1.48-1.76-1.65-2.06-.17-.3-.02-.46.13-.6.13-.14.3-.35.45-.52.15-.17.2-.3.3-.5.1-.2.05-.37-.03-.52-.07-.15-.67-1.61-.91-2.2-.24-.58-.49-.5-.67-.51h-.57c-.2 0-.52.07-.79.37-.27.3-1.04 1.02-1.04 2.48s1.07 2.88 1.21 3.07c.15.2 2.1 3.2 5.08 4.49.71.3 1.26.49 1.69.62.71.23 1.36.2 1.87.12.57-.09 1.76-.72 2.01-1.41.25-.69.25-1.29.17-1.41-.07-.12-.27-.2-.57-.35" /></symbol>
      <symbol id="i-chrome" viewBox="0 0 24 24"><circle cx="12" cy="12" r="11.800" fill="#fdc82f" /><path d="M12 .2a11.800 11.800 0 0 1 10.200 5.900H12A5.900 5.900 0 0 0 6.900 15L1.800 6.100A11.800 11.800 0 0 1 12 .2z" fill="#e33b2e" /><path d="M1.800 6.100 6.900 15A5.900 5.900 0 0 0 13.500 17.700L11 23.800A11.800 11.800 0 0 1 1.800 6.100z" fill="#29a24b" /><circle cx="12" cy="12" r="5.800" fill="#fff" /><circle cx="12" cy="12" r="4.700" fill="#2c78e8" /></symbol>
      <symbol id="i-note" viewBox="0 0 24 24"><path d="M12.525.02c1.31-.02 2.61-.01 3.91-.02.08 1.53.63 3.09 1.75 4.17 1.12 1.11 2.7 1.62 4.24 1.79v4.03c-1.44-.05-2.89-.35-4.2-.97-.57-.26-1.1-.59-1.62-.93-.01 2.92.01 5.84-.02 8.75-.08 1.4-.54 2.79-1.35 3.94-1.31 1.92-3.58 3.17-5.91 3.21-1.43.08-2.86-.31-4.08-1.03-2.02-1.19-3.44-3.37-3.65-5.71-.02-.5-.03-1-.01-1.49.18-1.9 1.12-3.72 2.58-4.96 1.66-1.44 3.98-2.13 6.15-1.72.02 1.48-.04 2.96-.04 4.44-.99-.32-2.15-.23-3.02.37-.63.41-1.11 1.04-1.36 1.75-.21.51-.15 1.07-.14 1.61.24 1.64 1.82 3.02 3.5 2.87 1.12-.01 2.19-.66 2.77-1.61.19-.33.4-.67.41-1.06.1-1.79.06-3.57.07-5.36.01-4.03-.01-8.05.02-12.07z" /></symbol>
      <symbol id="i-tiktok" viewBox="0 0 24 24"><circle cx="12" cy="12" r="12" fill="#000" /><use href="#i-note" x="4.700" y="4.600" width="13.500" height="13.500" fill="#25f4ee" /><use href="#i-note" x="6" y="5.800" width="13.500" height="13.500" fill="#fe2c55" /><use href="#i-note" x="5.350" y="5.200" width="13.500" height="13.500" fill="#fff" /></symbol>
      <symbol id="i-terminal" viewBox="0 0 24 24"><rect x=".9" y="2.500" width="22" height="18.500" fill="#060606" stroke="#8e9497" stroke-width="1" /><path d="M.4 3.300h23" stroke="#cfd5da" stroke-width="2" /></symbol>
      <symbol id="i-vscode" viewBox="0 0 24 24"><path d="M17 0 24 3.200v17.600L17 24 15 22V2z" fill="#29a5ef" /><path d="M17 0v7L3.500 18.200 0 16.500v-1.800z" fill="#1f86cf" /><path d="M17 24v-7L3.500 5.800 0 7.500v1.800z" fill="#1b74bd" /><path d="M17 0 15 1.800 17 7v10l-2 5.200L17 24l7-3.200V3.200z" fill="#2ba8f2" /></symbol>
      <symbol id="i-weather" viewBox="0 0 24 22"><circle cx="10.500" cy="11" r="10" fill="url(#g-sun)" /><path d="M9 18.500c-3-.2-2.400-3.600.4-3.600 0-4 6-5 7.400-1.500 3.500-.4 5.600 1.600 5 3.500-.4 1.200-1.500 1.600-2.800 1.600z" fill="#9dc0fa" /></symbol>
      <symbol id="i-up" viewBox="0 0 12 8"><path d="m1 6.500 5-5 5 5" fill="none" stroke="#f0f0f0" stroke-width="1.500" /></symbol>
      <symbol id="i-cloud" viewBox="0 0 17 15"><path d="M3.500 10.500C-.5 10.500 0 5 4 5 5 .5 12 0 13 4.500c4.500 0 4 6 0 6z" fill="#a0a09d" /><path d="M3.500 10.500C-.5 10.500 0 5 4 5c2.500-.5 4 1 5 5.500z" fill="#d8d8d4" /><circle cx="12.200" cy="10" r="4.500" fill="#3db5f0" /><path d="M12.200 9.300v3.200M12.200 7v1.300" stroke="#10364d" stroke-width="1.200" /></symbol>
      <symbol id="i-wifi" viewBox="0 0 16 14"><g fill="none" stroke="#f2f2f2" stroke-width="1.300"><path d="M.7 5.200c4-4.200 10.600-4.200 14.600 0M2.900 7.500c2.800-3 7.400-3 10.200 0M5 9.700c1.700-1.800 4.300-1.800 6 0" /></g><circle cx="8" cy="11.500" r="1.600" fill="#f2f2f2" /></symbol>
      <symbol id="i-vol" viewBox="0 0 16 14"><g fill="none" stroke="#f2f2f2" stroke-width="1.100"><path d="M.7 4.700h2.500L7 1.300v11.400L3.200 9.300H.7zM9 4.800c1.200 1.300 1.200 3.100 0 4.400M11 3c2.200 2.300 2.200 5.700 0 8M13 1.200c3.200 3.500 3.200 8.100 0 11.600" /></g></symbol>
      <symbol id="i-bat" viewBox="0 0 17 12"><rect x=".7" y="1" width="13.600" height="9.600" rx="2" fill="none" stroke="#f2f2f2" stroke-width="1.300" /><rect x="2.500" y="3" width="3" height="5.600" fill="#f2f2f2" /><path d="M15.700 4v3.600" stroke="#f2f2f2" stroke-width="1.400" /></symbol>
    </svg>

    <header class="browser">
      <div class="tabstrip">
        <div class="tabsearch"><svg width="10" height="7" viewBox="0 0 10 7"><path d="m1.500 1.500 3.500 3.300 3.500-3.300" fill="none" stroke="#eee" stroke-width="1.700" /></svg></div>
        <div v-for="t in tabs" :key="t.title" class="tab" :class="{ active: t.active, sep: t.sep }">
          <Ico :n="t.icon" />
          <span class="title">{{ t.title }}</span>
          <Ico n="close" />
        </div>
        <svg class="plus" width="12" height="12" viewBox="0 0 12 12"><path d="M6 .8v10.400M.8 6h10.400" stroke="#e8e8e8" stroke-width="1.600" /></svg>
        <div class="win">
          <svg width="12" height="12" viewBox="0 0 12 12"><path d="M1 5.500h10" stroke="#fff" /></svg>
          <svg width="12" height="12" viewBox="0 0 12 12"><path d="M1.500 3.500h7v7h-7zM3.500 3.500v-1q0-1 1-1h5q1 0 1 1v5q0 1-1 1h-1" fill="none" stroke="#fff" /></svg>
          <svg width="12" height="12" viewBox="0 0 12 12"><path d="m1 1 10 10M11 1 1 11" stroke="#fff" stroke-width="1.200" /></svg>
        </div>
      </div>
      <div class="toolbar">
        <Ico n="back" class="nav" /><Ico n="fwd" class="nav" /><Ico n="reload" class="nav" />
        <div class="omnibox">
          <Ico n="info" :w="24" />
          <span class="url">localhost<i>:8501</i></span>
          <Ico n="star" />
        </div>
        <div class="ext">
          <Ico n="ublock" /><Ico n="idm" /><Ico n="puzzle" :w="18" />
          <b class="bar"></b>
          <Ico n="avatar" :w="20" /><Ico n="dots" :w="4" :t="16" />
        </div>
      </div>
      <div class="bookmarks">
        <Ico n="grid" :w="14" /><b class="bar first"></b>
        <div v-for="b in bookmarks" :key="b.label" class="bm" :style="{ width: b.width + 'px' }">
          <Ico :n="b.icon" /><span>{{ b.label }}</span>
          <span v-if="b.glyph" class="glyph">{{ b.glyph }}</span>
        </div>
        <div class="bmright"><Ico n="more" :w="12" /><b class="bar"></b><Ico n="dir" :w="16" :t="14" /><span>All Bookmarks</span></div>
      </div>
    </header>

    <div class="stripe"></div>

    <div class="page">
      <aside class="sidebar">
        <h2><Ico n="gear" :w="24" />Settings</h2>
        <button class="voice"><Ico n="mic" :w="12" :t="17" />Toggle Voice Assistant</button>
        <div class="speak"><span class="switch"><i></i></span><Ico n="speaker" :w="17" :t="14" /><span class="speaktext">Speak Responses</span></div>
        <hr />
        <p class="supported"><Ico n="pin" :w="17" :t="16" />Supported Features:</p>
        <ul>
          <li v-for="f in features" :key="f.text"><Ico :n="f.icon" />{{ f.text }}</li>
        </ul>
      </aside>
      <main class="main">
        <label class="label"><Ico n="hand" :w="16" :t="14" />Or type your request here:</label>
        <div class="input">help me prepare for today<i class="caret"></i></div>
        <h1><Ico n="brain" :w="36" :t="33" />Processing...</h1>
        <h1 class="resp"><Ico n="check" :w="36" />Assistant's Response</h1>
        <h3><Ico n="brain" :w="24" :t="22" />Output<Ico n="link" :w="16" :t="8" class="link" /></h3>
        <p v-for="p in paragraphs" :key="p">{{ p }}</p>
      </main>
      <div class="deploy"><span>Deploy</span><Ico n="dots" :w="4" :t="16" /></div>
      <div class="scroll"><i class="a up"></i><i class="thumb"></i><i class="a down"></i></div>
    </div>

    <footer class="taskbar">
      <Ico n="win" :w="23" class="start" />
      <div class="search"><Ico n="search" /><span>Search</span><Ico n="reef" :w="50" :t="24" /></div>
      <div class="apps">
        <div v-for="a in apps" :key="a.icon" class="app" :class="{ on: a.avatar }">
          <Ico :n="a.icon" :w="24" />
          <span v-if="a.badge" class="badge">{{ a.badge }}</span>
          <span v-if="a.prompt" class="prompt">{{ a.prompt }}</span>
          <Ico v-if="a.avatar" n="avatar" :w="16" class="pic" />
          <i v-if="a.mark" :class="a.mark"></i>
        </div>
      </div>
      <div class="weather">
        <div class="wicon"><Ico n="weather" :w="24" :t="22" /><span>3</span></div>
        <div class="wtext"><div>32°C</div><div class="dim">Mostly sunny</div></div>
      </div>
      <div class="tray">
        <Ico n="up" :w="12" :t="8" /><Ico n="cloud" :w="17" :t="15" /><Ico n="wifi" :w="16" :t="14" /><Ico n="vol" :w="16" :t="14" /><Ico n="bat" :w="17" :t="12" />
      </div>
      <div class="clock"><div>4:23 pm</div><div>02/07/2025</div></div>
    </footer>
  </div>
</template>

<style>
html, body { margin: 0; background: #0e1117; overflow: hidden; }
</style>

<style scoped>
* { box-sizing: border-box; }
svg { display: block; flex: none; }
.screen { width: 1366px; height: 768px; display: flex; flex-direction: column; overflow: hidden; color: #fafafa; font: 11.7px/16px "Open Sans", "Noto Sans", sans-serif; white-space: nowrap; }
.defs { position: absolute; }
.bar { display: block; width: 2px; height: 16px; background: #0c0c0c; }

.browser { height: 121px; background: #2d2d2d; border-bottom: 1px solid #5b5b5b; }
.tabstrip { height: 40px; background: #000; display: flex; align-items: center; letter-spacing: -.16px; }
.tabsearch { width: 28px; height: 28px; margin: 0 6px; border-radius: 9px; background: #2b2b2b; display: flex; align-items: center; justify-content: center; }
.tab { position: relative; width: 238px; height: 40px; padding: 0 14px 0 8px; display: flex; align-items: center; }
.tab .title { width: 168px; margin: 0 8px; padding-top: 1px; overflow: hidden; -webkit-mask-image: linear-gradient(90deg, #000 140px, transparent 168px); }
.tab.sep::after { content: ""; position: absolute; left: 234px; top: 12px; width: 2px; height: 16px; background: #2b2b2b; }
.tab.active::before { content: ""; position: absolute; left: 0; top: 6px; width: 232px; height: 34px; border-radius: 10px 10px 0 0; background: #2d2d2d; }
.tab.active::after { content: ""; position: absolute; left: -10px; bottom: 0; width: 252px; height: 10px; background: radial-gradient(circle at 0 0, transparent 9.5px, #2d2d2d 10px) left / 10px 10px no-repeat, radial-gradient(circle at 100% 0, transparent 9.5px, #2d2d2d 10px) right / 10px 10px no-repeat; }
.tab.active > * { position: relative; z-index: 1; }
.plus { margin-left: 8px; }
.win { margin-left: auto; display: flex; gap: 34px; padding-right: 17px; }
.toolbar { height: 46px; display: flex; align-items: center; padding-left: 14px; }
.nav { margin-right: 20px; }
.omnibox { width: 1036px; height: 34px; margin-left: -2px; border-radius: 17px; background: #3f3f3f; display: flex; align-items: center; padding: 0 16px 0 5px; font-size: 13.3px; }
.url { flex: 1; margin-left: 8px; letter-spacing: -.1px; }
.url i { font-style: normal; color: #a6a6a6; }
.ext { flex: 1; display: flex; align-items: center; padding-left: 18px; }
.ext > :nth-child(2) { margin-left: 20px; }
.ext > :nth-child(3) { margin-left: 20px; }
.ext > :nth-child(4) { margin-left: 16px; }
.ext > :nth-child(5) { margin-left: 16px; }
.ext > :nth-child(6) { margin-left: 24px; }
.bookmarks { height: 28px; display: flex; align-items: center; padding-left: 19px; letter-spacing: -.14px; }
.bar.first { margin: 0 14px 0 15px; }
.bm { position: relative; display: flex; align-items: center; gap: 6px; }
.glyph { position: absolute; left: 0; top: 0; width: 16px; text-align: center; font: 900 10.5px/15px Lato, sans-serif; letter-spacing: 0; }
.bmright { margin-left: auto; display: flex; align-items: center; padding-right: 15px; }
.bmright .bar { margin: 0 17px 0 16px; }
.bmright span { margin-left: 8px; }
.stripe { height: 2px; background: linear-gradient(90deg, #ff4b4b, #fffd80); }

.page { position: relative; height: 597px; display: flex; background: #0e1117; overflow: hidden; font: 14.4px/25.6px "Noto Sans CJK SC", "Noto Sans", sans-serif; letter-spacing: -.032px; }
.sidebar { width: 256px; background: #262730; padding: 91px 20px 0; }
.sidebar h2 { margin: 0; height: 33px; display: flex; align-items: center; gap: 10px; padding: 0 0 2px 4px; font-size: 21.6px; font-weight: 600; letter-spacing: -.38px; }
.voice { margin: 15px 0 0; width: 198px; height: 40px; display: flex; align-items: center; gap: 8.500px; padding: 0 0 2px 17px; border: 1px solid #4d4e57; border-radius: 8px; background: #2b2c36; color: #fafafa; font: inherit; letter-spacing: -.05px; }
.speak { margin-top: 15px; height: 26px; display: flex; align-items: center; }
.switch { width: 32px; height: 16px; border-radius: 8px; background: #7b7b80; padding: 2px; margin-right: 11px; }
.switch i { display: block; width: 12px; height: 12px; border-radius: 6px; background: #fff; }
.speaktext { margin-left: 5px; padding-bottom: 2px; }
hr { margin: 47px 0 0; border: 0; height: 1px; background: #4f5058; }
.supported { margin: 31px 0 0; padding-left: 2px; display: flex; align-items: center; gap: 6px; font-weight: 600; letter-spacing: -.25px; }
ul { margin: 16px 0 0; padding: 3.2px 0 0 23.6px; list-style: none; white-space: normal; font-weight: 600; letter-spacing: -.25px; }
li { position: relative; margin-bottom: 3px; }
li::before { content: ""; position: absolute; left: -22.6px; top: 12px; width: 5px; height: 5px; border-radius: 50%; background: #fafafa; }
li svg { display: inline-block; margin: 0 6px 0 2.5px; vertical-align: -2px; }
.main { width: 1020px; padding: 0 0 0 80px; white-space: normal; }
.label { display: flex; align-items: center; gap: 4px; height: 20px; padding-left: 2px; font-size: 12.6px; letter-spacing: -.05px; }
.input { margin-top: 8px; height: 40px; border: 1px solid #ff4b4b; border-radius: 8px; background: #262730; padding: 0 12px 4px; display: flex; align-items: center; letter-spacing: -.06px; }
.caret { width: 1px; height: 20px; margin-left: -1px; background: #fff; }
h1 { margin: 0; height: 75px; padding: 0 0 5px 7px; display: flex; align-items: center; gap: 13.5px; font-size: 32.4px; font-weight: 600; line-height: 43px; letter-spacing: -.72px; }
h1 svg { margin-top: 4px; }
h1.resp svg { margin-top: 2px; }
.input + h1 { margin-top: 16px; }
h3 { margin: 0; height: 45px; padding: 0 0 4px 5px; display: flex; align-items: center; gap: 9px; font-size: 21.6px; font-weight: 600; letter-spacing: -.4px; }
h3 svg { margin-top: 2px; }
h3 .link { margin: 5px 0 0 -1px; }
.main p { margin: 0 0 16px; }
h3 + p { padding-top: 7px; }
.deploy { position: absolute; left: 1267px; top: 14px; display: flex; align-items: center; font-size: 12.6px; font-weight: 500; letter-spacing: -.15px; color: #e3e4e6; }
.deploy svg { margin: 2px 0 0 24px; }
.scroll { position: absolute; right: 0; top: 0; width: 10px; height: 597px; display: flex; flex-direction: column; align-items: center; }
.thumb { width: 6px; height: 238px; margin-top: 122px; border-radius: 3px; background: #6c6d70; }
.a { width: 0; height: 0; border: 3px solid transparent; }
.up { border-top: 0; border-bottom: 5px solid #77787b; margin-top: 1px; }
.down { border-bottom: 0; border-top: 5px solid #77787b; margin-top: auto; margin-bottom: 2px; }

.taskbar { height: 48px; border-top: 1px solid #48483f; padding-bottom: 1px; background: linear-gradient(90deg, #24251a, #22231a 30%, #252614 70%, #242513); display: flex; align-items: center; }
.start { margin: 0 13px 0 21px; }
.search { width: 220px; height: 32px; border-radius: 16px; border: 1px solid #55564a; background: #3f4136; display: flex; align-items: center; padding: 0 1px 0 10px; font-size: 13px; color: #c9cac5; }
.search span { flex: 1; margin-left: 10px; }
.apps { display: flex; margin-left: 4px; gap: 4px; }
.app { position: relative; width: 40px; height: 40px; border-radius: 4px; display: flex; align-items: center; justify-content: center; }
.app.on { background: #34352a; box-shadow: inset 0 0 0 1px #3d3e33; }
.badge { position: absolute; left: 19px; top: 3px; width: 20px; height: 16px; border-radius: 8px; background: #dc9de8; color: #2c1d2e; text-align: center; font-size: 12px; line-height: 16px; }
.prompt { position: absolute; left: 11px; top: 12px; font: 700 6px/8px "Liberation Mono", monospace; color: #e8e8e8; }
.pic { position: absolute; left: 21px; top: 3px; }
.app > i { position: absolute; bottom: 1px; left: 17px; width: 6px; height: 3px; border-radius: 2px; background: #96978f; }
.app > i.line { left: 12px; width: 16px; background: #dc9de8; }
.weather { display: flex; align-items: center; margin-left: 175px; width: 160px; }
.wicon { position: relative; }
.wicon span { position: absolute; left: 10px; top: -8px; width: 16px; height: 16px; border-radius: 8px; background: #ff99a4; color: #3a1418; text-align: center; font-size: 10.5px; }
.wtext { margin-left: 6px; letter-spacing: -.05px; }
.dim { color: #b3b4aa; }
.tray { display: flex; align-items: center; margin-left: 2px; }
.tray > :nth-child(2) { margin-left: 18px; }
.tray > :nth-child(3) { margin-left: 15px; }
.tray > :nth-child(4) { margin-left: 8px; }
.tray > :nth-child(5) { margin-left: 8px; }
.clock { margin-left: auto; padding-right: 19px; text-align: right; letter-spacing: -.05px; }
</style>
